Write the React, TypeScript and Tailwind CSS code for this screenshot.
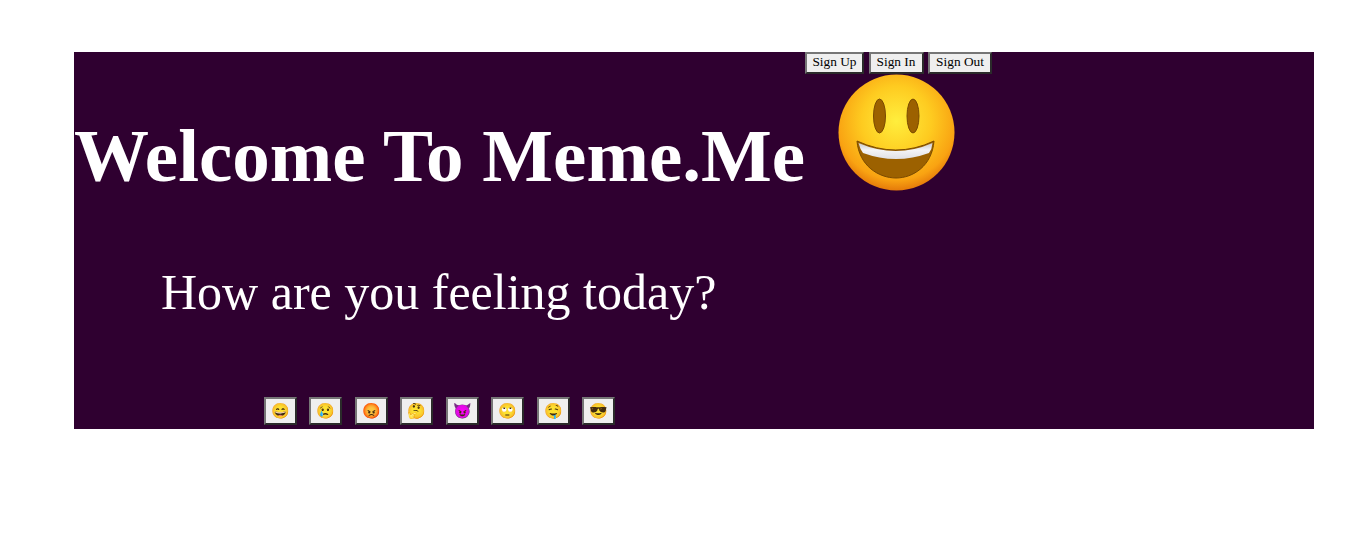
const emojis = ["😄", "😢", "😡", "🤔", "😈", "🙄", "🤤", "😎"];

const bevel = "bg-[#efefef] border-2 border-t-[#767676] border-l-[#767676] border-r-[#2b2b2b] border-b-[#2b2b2b] text-black";

const Btn = ({ label, className }: { label: string; className: string }) => (
  <button className={`h-[22px] pb-[6px] leading-[15px] text-[13.33px] ${bevel} ${className}`}>{label}</button>
);

const Smiley = () => (
  <svg viewBox="0 0 117 117" className="ml-[33px] w-[117px] h-[117px]">
    <defs>
      <radialGradient id="face" cx="50%" cy="40%" r="60%">
        <stop offset="0%" stopColor="#ffee3d" />
        <stop offset="50%" stopColor="#fecb20" />
        <stop offset="85%" stopColor="#f9a312" />
        <stop offset="100%" stopColor="#e57a0a" />
      </radialGradient>
      <linearGradient id="teeth" x1="0" y1="0" x2="0" y2="1">
        <stop offset="0%" stopColor="#c8c8cc" />
        <stop offset="45%" stopColor="#f4f4f6" />
        <stop offset="100%" stopColor="#e0e0e4" />
      </linearGradient>
    </defs>
    <circle cx="58.5" cy="58.5" r="58" fill="url(#face)" />
    <ellipse cx="41.5" cy="42" rx="6" ry="17" fill="#9c6100" stroke="#7a4a00" strokeWidth="1" />
    <ellipse cx="75" cy="42" rx="6" ry="17" fill="#9c6100" stroke="#7a4a00" strokeWidth="1" />
    <path d="M19 67 Q58 85 96 67 C94 92 75 104 58 104 C41 104 21 92 19 67 Z" fill="#9c6100" stroke="#7a4a00" strokeWidth="1" />
    <path d="M20.5 69 Q58 85 94.5 69 Q94 75 91 79 Q58 91 25 79 Q22 75 20.5 69 Z" fill="url(#teeth)" />
  </svg>
);

export default function App() {
  return (
    <div className="h-[540px] bg-white pt-[52px] pl-[74px] pr-[36px] font-['Liberation_Serif',serif] overflow-hidden">
      <div className="h-[377px] bg-[#2f0030] text-white flex flex-col">
        <div className="flex items-start h-[170px]">
          <h1 className="mt-[61px] text-[75px] leading-[85px] font-bold whitespace-nowrap">Welcome To Meme.Me</h1>
          <div className="flex flex-col">
            <div className="flex gap-[4.5px]">
              <Btn label="Sign Up" className="w-[59px]" />
              <Btn label="Sign In" className="w-[55px]" />
              <Btn label="Sign Out" className="w-[64px]" />
            </div>
            <Smiley />
          </div>
        </div>
        <p className="mt-[40px] ml-[87px] text-[50px] leading-[60px]">How are you feeling today?</p>
        <div className="mt-[75px] ml-[190px] flex gap-[12.45px]">
          {emojis.map((e) => (
            <button key={e} className={`w-[33px] h-[28px] text-[15px] leading-none ${bevel}`}>
              {e}
            </button>
          ))}
        </div>
      </div>
    </div>
  );
}
